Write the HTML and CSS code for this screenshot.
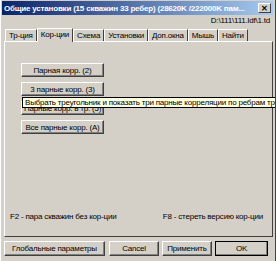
FILE: index.html
```html
<!DOCTYPE html>
<html lang="ru">
<head>
  <meta charset="UTF-8">
  <title>Общие установки</title>
  <link rel="stylesheet" href="styles.css">
</head>
<body>
  <div class="window">
    <div class="titlebar">
      <span class="title">Общие установки (15 скважин 33 ребер) (28620K /222000K пам...</span>
      <span class="close">&#x2715;</span>
    </div>
    <div class="path">D:\111\111.ldf\1.td</div>

    <div class="tabs">
      <span class="tab">Тр-ция</span>
      <span class="tab active">Кор-ции</span>
      <span class="tab">Схема</span>
      <span class="tab">Установки</span>
      <span class="tab">Доп.окна</span>
      <span class="tab">Мышь</span>
      <span class="tab">Найти</span>
    </div>

    <div class="panel">
      <div class="actions">
        <button class="btn">Парная корр. (2)</button>
        <button class="btn">3 парные корр. (3)</button>
        <button class="btn">Парные корр. в тр. (5)</button>
        <button class="btn">Все парные корр. (А)</button>
      </div>
      <div class="tooltip">Выбрать треугольник и показать три парные корреляции по ребрам треугольника</div>
      <div class="hints">
        <span>F2 - пара скважин без кор-ции</span>
        <span>F8 - стереть версию кор-ции</span>
      </div>
    </div>

    <div class="footer">
      <button class="btn wide">Глобальные параметры</button>
      <button class="btn">Cancel</button>
      <button class="btn">Применить</button>
      <button class="btn default">OK</button>
    </div>
  </div>
</body>
</html>
```

FILE: styles.css
```css
body {
  margin: 0;
  width: 276px;
  height: 261px;
  overflow: hidden;
  background: #d4d0c8;
  font-family: "Liberation Sans", Arial, sans-serif;
  font-size: 8px;
  letter-spacing: -0.2px;
  color: #000;
  white-space: nowrap;
}

.window {
  position: relative;
  height: 261px;
  padding: 1px 2px 0 1px;
  box-sizing: border-box;
  border-left: 1px solid #fff;
  border-right: 1px solid #404040;
  overflow: hidden;
}

.titlebar {
  display: flex;
  align-items: center;
  justify-content: space-between;
  height: 14px;
  padding: 0 2px 0 2px;
  background: linear-gradient(to right, #0a246a, #a6caf0);
  color: #fff;
}

.title {
  font-weight: bold;
  overflow: hidden;
}

.close {
  flex: none;
  width: 13px;
  height: 10px;
  line-height: 10px;
  text-align: center;
  font-size: 8px;
  font-weight: bold;
  color: #000;
  background: #d4d0c8;
  border: 1px solid;
  border-color: #fff #404040 #404040 #fff;
  box-sizing: border-box;
}

.path {
  text-align: right;
  height: 12px;
  line-height: 12px;
  padding-right: 3px;
}

.tabs {
  display: flex;
  align-items: flex-end;
  height: 14px;
  padding-left: 3px;
}

.tab {
  height: 11px;
  line-height: 11px;
  padding: 0 3px;
  border-top: 1px solid #fff;
  border-left: 1px solid #fff;
  border-right: 1px solid #404040;
}

.tab.active {
  height: 13px;
  line-height: 12px;
  background: #d4d0c8;
  margin-bottom: -1px;
  position: relative;
  z-index: 1;
}

.panel {
  position: relative;
  display: flex;
  flex-direction: column;
  height: 196px;
  margin: 0 0 0 2px;
  border: 1px solid;
  border-color: #fff #404040 #404040 #fff;
  box-sizing: border-box;
}

.actions {
  display: flex;
  flex-direction: column;
  align-items: flex-start;
  gap: 5px;
  padding: 21px 0 0 16px;
}

.btn {
  font: inherit;
  letter-spacing: inherit;
  height: 14px;
  padding: 0 2px;
  background: #d4d0c8;
  border: 1px solid;
  border-color: #fff #404040 #404040 #fff;
  box-shadow: inset -1px -1px #808080;
  color: #000;
  white-space: nowrap;
}

.actions .btn {
  width: 83px;
}

.tooltip {
  position: absolute;
  left: 17px;
  top: 55px;
  height: 11px;
  line-height: 10px;
  padding: 0 2px;
  background: #ffffe1;
  border: 1px solid #000;
  box-sizing: border-box;
}

.hints {
  display: flex;
  justify-content: space-between;
  margin-top: auto;
  padding: 0 9px 15px 5px;
}

.footer {
  display: flex;
  gap: 3px;
  padding: 4px 0 0 2px;
}

.footer .btn {
  height: 15px;
  width: 50px;
}

.footer .btn.wide {
  width: 101px;
  margin-right: 1px;
}

.footer .btn.default {
  width: 53px;
  outline: 1px solid #000;
  outline-offset: -1px;
}
```
